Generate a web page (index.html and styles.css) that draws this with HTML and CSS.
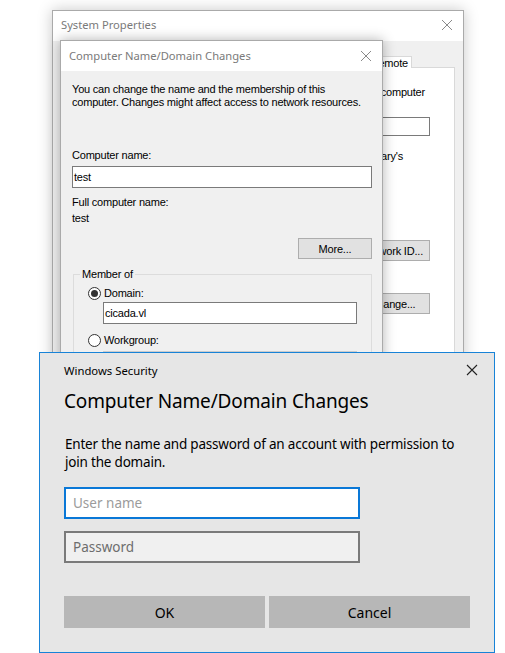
FILE: index.html
```html
<!DOCTYPE html>
<html lang="en">
<head>
    <meta charset="UTF-8">
    <meta name="viewport" content="width=device-width, initial-scale=1.0">
    <title>Computer Name/Domain Changes</title>
    <link rel="stylesheet" href="styles.css">
</head>
<body>
    <div class="desktop">

        <!-- System Properties (back window) -->
        <div class="window sysprops">
            <div class="titlebar">
                <span class="title">System Properties</span>
                <svg class="close" width="12" height="12" viewBox="0 0 12 12"><path d="M1 1L11 11M11 1L1 11"/></svg>
            </div>
            <div class="sys-body">
                <div class="tabs">
                    <div class="tab">Remote</div>
                </div>
                <div class="panel">
                    <div class="prow r1">computer</div>
                    <div class="prow r2"><div class="sys-input"></div></div>
                    <div class="prow r3">Mary's</div>
                    <div class="prow r4"><button class="btn sys-btn">Network ID...</button></div>
                    <div class="prow r5"><button class="btn sys-btn">Change...</button></div>
                </div>
            </div>
        </div>

        <!-- Computer Name/Domain Changes -->
        <div class="window cndc">
            <div class="titlebar">
                <span class="title">Computer Name/Domain Changes</span>
                <svg class="close" width="12" height="12" viewBox="0 0 12 12"><path d="M1 1L11 11M11 1L1 11"/></svg>
            </div>
            <div class="cn-body">
                <p class="intro">You can change the name and the membership of this computer. Changes might affect access to network resources.</p>

                <div class="label">Computer name:</div>
                <div class="field">test</div>

                <div class="label full">Full computer name:</div>
                <div class="value">test</div>

                <div class="more-row"><button class="btn">More...</button></div>

                <fieldset class="group">
                    <legend>Member of</legend>
                    <div class="radio-row"><span class="radio checked"></span>Domain:</div>
                    <div class="field sub">cicada.vl</div>
                    <div class="radio-row wg"><span class="radio"></span>Workgroup:</div>
                    <div class="field sub disabled"></div>
                </fieldset>
            </div>
        </div>

        <!-- Windows Security credential prompt -->
        <div class="winsec">
            <div class="ws-top">
                <span class="ws-caption">Windows Security</span>
                <svg class="ws-close" width="12" height="12" viewBox="0 0 12 12"><path d="M1 1L11 11M11 1L1 11"/></svg>
            </div>
            <h2 class="ws-heading">Computer Name/Domain Changes</h2>
            <p class="ws-text">Enter the name and password of an account with permission to join the domain.</p>
            <div class="ws-input focused">User name</div>
            <div class="ws-input">Password</div>
            <div class="ws-buttons">
                <button class="ws-btn">OK</button>
                <button class="ws-btn">Cancel</button>
            </div>
        </div>

    </div>
</body>
</html>
```

FILE: styles.css
```css
* {
    box-sizing: border-box;
}
body {
    margin: 0;
    background: #ffffff;
    font-family: "Liberation Sans", Arial, sans-serif;
}
.desktop {
    position: relative;
    width: 505px;
    height: 653px;
    overflow: hidden;
}

/* ---- classic windows ---- */
.window {
    position: absolute;
    background: #f0f0f0;
    border: 1px solid #aaaaaa;
    display: flex;
    flex-direction: column;
    letter-spacing: -0.2px;
}
.titlebar {
    height: 30px;
    background: #ffffff;
    display: flex;
    align-items: center;
    justify-content: space-between;
    padding: 0 10px 1px 8px;
    flex-shrink: 0;
}
.title {
    font-family: "Noto Sans", sans-serif;
    font-size: 11.2px;
    letter-spacing: 0;
    color: #7a7a7a;
}
.close path {
    stroke: #8a8a8a;
    stroke-width: 1;
    fill: none;
}
.btn {
    font-family: "Liberation Sans", Arial, sans-serif;
    font-size: 11px;
    letter-spacing: -0.2px;
    height: 21px;
    width: 74px;
    background: #e1e1e1;
    border: 1px solid #adadad;
    color: #000;
    padding: 0;
}

.sysprops {
    left: 52px;
    top: 10px;
    width: 412px;
    height: 400px;
    box-shadow: 0 0 14px rgba(0, 0, 0, 0.22);
}
.sysprops .titlebar {
    padding-bottom: 3px;
}
.sys-body {
    flex: 1;
    padding: 15px 8px 0 7px;
    display: flex;
    flex-direction: column;
}
.tabs {
    display: flex;
    justify-content: flex-end;
    padding-right: 43px;
    height: 11px;
    align-items: flex-end;
}
.tab {
    font-size: 11px;
    height: 12px;
    line-height: 12px;
    padding: 0 3px 0 3px;
    border: 1px solid #d9d9d9;
    border-bottom: none;
    background: #ffffff;
    margin-bottom: -1px;
    position: relative;
}
.panel {
    flex: 1;
    background: #ffffff;
    border: 1px solid #d9d9d9;
    font-size: 11px;
    display: flex;
    flex-direction: column;
    align-items: flex-end;
}
.prow {
    display: flex;
    justify-content: flex-end;
    white-space: nowrap;
}
.r1 { margin-top: 18px; padding-right: 29px; }
.r2 { margin-top: 19px; padding-right: 24px; }
.sys-input {
    width: 300px;
    height: 19px;
    border: 1px solid #7a7a7a;
    background: #fff;
}
.r3 { margin-top: 14px; padding-right: 51px; }
.r4 { margin-top: 78px; padding-right: 24px; }
.r5 { margin-top: 32px; padding-right: 24px; }
.sys-btn {
    width: 75px;
}

.cndc {
    left: 60px;
    top: 40px;
    width: 323px;
    height: 340px;
    box-shadow: 0 0 12px rgba(0, 0, 0, 0.3);
}
.cn-body {
    padding: 12px 10px 0 11px;
    font-size: 11px;
    color: #000;
}
.intro {
    margin: 0;
    line-height: 13px;
}
.label {
    margin-top: 40px;
    line-height: 13px;
}
.label.full {
    margin-top: 8px;
}
.field {
    height: 22px;
    border: 1px solid #7a7a7a;
    background: #ffffff;
    padding: 4px 1px;
    line-height: 13px;
    margin-top: 4px;
}
.value {
    margin-top: 3px;
    line-height: 13px;
}
.more-row {
    display: flex;
    justify-content: flex-end;
    margin-top: 13px;
}
.more-row .btn {
    width: 74px;
}
.group {
    margin: 9px 0 0 1px;
    padding: 6px 14px 0 14px;
    border: 1px solid #dcdcdc;
    border-bottom: none;
    min-width: 0;
}
.group legend {
    padding: 0 2px 0 2px;
    margin-left: -8px;
    line-height: 13px;
}
.radio-row {
    display: flex;
    align-items: center;
    line-height: 13px;
}
.radio {
    width: 13px;
    height: 13px;
    border: 1px solid #333333;
    border-radius: 50%;
    background: #ffffff;
    margin-right: 3px;
    display: flex;
    align-items: center;
    justify-content: center;
}
.radio.checked::after {
    content: "";
    width: 7px;
    height: 7px;
    border-radius: 50%;
    background: #333333;
}
.field.sub {
    margin-left: 15px;
    margin-top: 2px;
}
.radio-row.wg {
    margin-top: 10px;
}
.field.disabled {
    border-color: #cccccc;
    background: #f0f0f0;
    margin-top: 4px;
}

/* ---- Windows Security prompt ---- */
.winsec {
    position: absolute;
    left: 39px;
    top: 352px;
    width: 456px;
    height: 301px;
    background: #e6e6e6;
    border: 1px solid #1883d7;
    font-family: "Noto Sans", sans-serif;
    color: #000;
    padding: 0 24px 0 24px;
}
.ws-top {
    display: flex;
    justify-content: space-between;
    align-items: center;
    height: 34px;
    margin-right: -8px;
}
.ws-caption {
    font-size: 11.3px;
}
.ws-close path {
    stroke: #222;
    stroke-width: 1.1;
    fill: none;
}
.ws-heading {
    font-weight: normal;
    font-size: 19px;
    letter-spacing: -0.15px;
    margin: 0;
    line-height: 28px;
}
.ws-text {
    font-size: 13.5px;
    letter-spacing: -0.2px;
    line-height: 18px;
    margin: 20px 0 0 1px;
    width: 410px;
}
.ws-input {
    width: 296px;
    height: 32px;
    border: 2px solid #7a7a7a;
    background: #f0f0f0;
    margin-top: 12px;
    font-size: 13.5px;
    color: #6d6d6d;
    padding: 5px 0 0 7px;
}
.ws-input.focused {
    margin-top: 16px;
    background: #ffffff;
    border-color: #0a78d7;
    color: #9b9b9b;
}
.ws-buttons {
    display: flex;
    gap: 4px;
    margin-top: 33px;
    width: 406px;
}
.ws-btn {
    flex: 1;
    height: 32px;
    border: none;
    background: #b7b7b7;
    font-family: "Noto Sans", sans-serif;
    font-size: 14px;
    color: #000;
}
```
